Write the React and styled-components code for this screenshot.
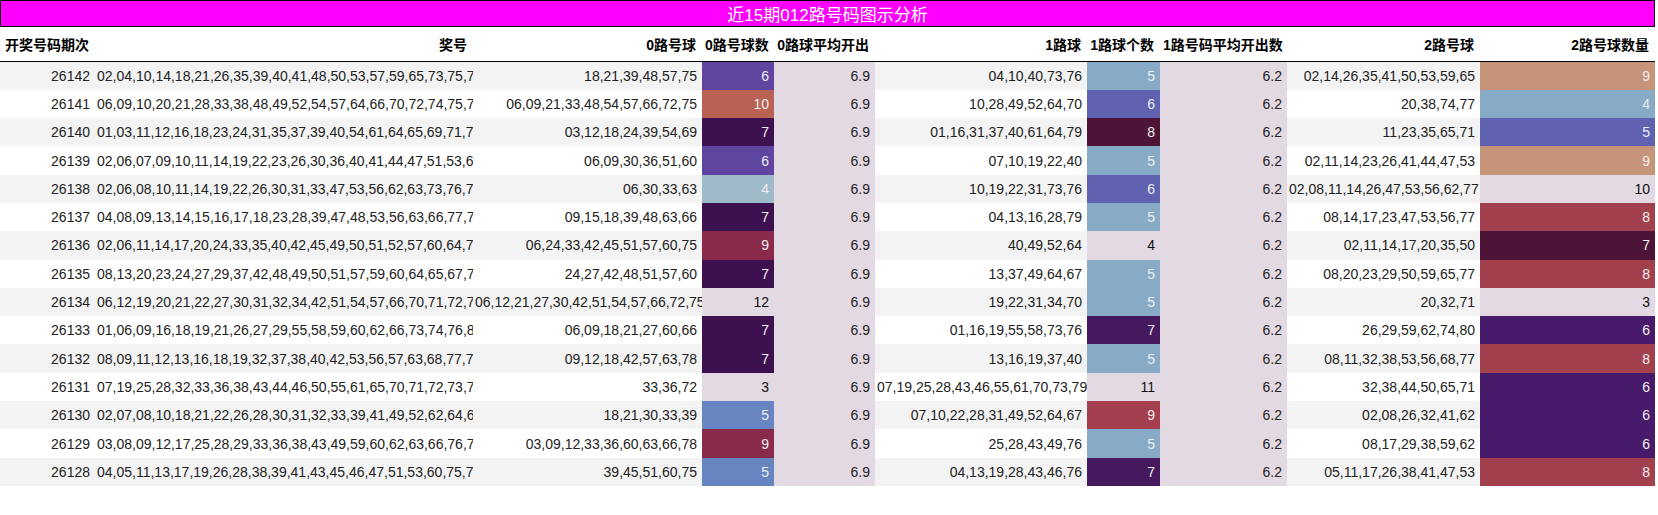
import styled, { createGlobalStyle } from "styled-components";

const GlobalStyle = createGlobalStyle`
  body {
    margin: 0;
    font-family: "Liberation Sans", "Noto Sans CJK SC", sans-serif;
    background: #fff;
  }
`;

const rows = [
  ["26142", "02,04,10,14,18,21,26,35,39,40,41,48,50,53,57,59,65,73,75,76", "18,21,39,48,57,75", 6, "04,10,40,73,76", 5, "02,14,26,35,41,50,53,59,65", 9],
  ["26141", "06,09,10,20,21,28,33,38,48,49,52,54,57,64,66,70,72,74,75,77", "06,09,21,33,48,54,57,66,72,75", 10, "10,28,49,52,64,70", 6, "20,38,74,77", 4],
  ["26140", "01,03,11,12,16,18,23,24,31,35,37,39,40,54,61,64,65,69,71,79", "03,12,18,24,39,54,69", 7, "01,16,31,37,40,61,64,79", 8, "11,23,35,65,71", 5],
  ["26139", "02,06,07,09,10,11,14,19,22,23,26,30,36,40,41,44,47,51,53,60", "06,09,30,36,51,60", 6, "07,10,19,22,40", 5, "02,11,14,23,26,41,44,47,53", 9],
  ["26138", "02,06,08,10,11,14,19,22,26,30,31,33,47,53,56,62,63,73,76,77", "06,30,33,63", 4, "10,19,22,31,73,76", 6, "02,08,11,14,26,47,53,56,62,77", 10],
  ["26137", "04,08,09,13,14,15,16,17,18,23,28,39,47,48,53,56,63,66,77,79", "09,15,18,39,48,63,66", 7, "04,13,16,28,79", 5, "08,14,17,23,47,53,56,77", 8],
  ["26136", "02,06,11,14,17,20,24,33,35,40,42,45,49,50,51,52,57,60,64,75", "06,24,33,42,45,51,57,60,75", 9, "40,49,52,64", 4, "02,11,14,17,20,35,50", 7],
  ["26135", "08,13,20,23,24,27,29,37,42,48,49,50,51,57,59,60,64,65,67,77", "24,27,42,48,51,57,60", 7, "13,37,49,64,67", 5, "08,20,23,29,50,59,65,77", 8],
  ["26134", "06,12,19,20,21,22,27,30,31,32,34,42,51,54,57,66,70,71,72,75", "06,12,21,27,30,42,51,54,57,66,72,75", 12, "19,22,31,34,70", 5, "20,32,71", 3],
  ["26133", "01,06,09,16,18,19,21,26,27,29,55,58,59,60,62,66,73,74,76,80", "06,09,18,21,27,60,66", 7, "01,16,19,55,58,73,76", 7, "26,29,59,62,74,80", 6],
  ["26132", "08,09,11,12,13,16,18,19,32,37,38,40,42,53,56,57,63,68,77,78", "09,12,18,42,57,63,78", 7, "13,16,19,37,40", 5, "08,11,32,38,53,56,68,77", 8],
  ["26131", "07,19,25,28,32,33,36,38,43,44,46,50,55,61,65,70,71,72,73,79", "33,36,72", 3, "07,19,25,28,43,46,55,61,70,73,79", 11, "32,38,44,50,65,71", 6],
  ["26130", "02,07,08,10,18,21,22,26,28,30,31,32,33,39,41,49,52,62,64,67", "18,21,30,33,39", 5, "07,10,22,28,31,49,52,64,67", 9, "02,08,26,32,41,62", 6],
  ["26129", "03,08,09,12,17,25,28,29,33,36,38,43,49,59,60,62,63,66,76,78", "03,09,12,33,36,60,63,66,78", 9, "25,28,43,49,76", 5, "08,17,29,38,59,62", 6],
  ["26128", "04,05,11,13,17,19,26,28,38,39,41,43,45,46,47,51,53,60,75,76", "39,45,51,60,75", 5, "04,13,19,28,43,46,76", 7, "05,11,17,26,38,41,47,53", 8],
];

const light = "#e2d9e2";
const palettes = [
  { 3: light, 4: "#9fbac9", 5: "#6785c0", 6: "#5f45a0", 7: "#3d1150", 9: "#8a2a4b", 10: "#b96253", 12: light },
  { 4: light, 5: "#87aac6", 6: "#5e62b1", 7: "#46195e", 8: "#4d1437", 9: "#a43f4f", 11: light },
  { 3: light, 4: "#87aac6", 5: "#5e62b1", 6: "#481a6b", 7: "#4d1437", 8: "#a3404e", 9: "#c69579", 10: light },
];

const Page = styled.div`
  width: 1655px;
`;

const Title = styled.div`
  height: 25px;
  background: #ff00ff;
  border: 1px solid #000;
  color: #fff;
  font-size: 17px;
  display: flex;
  align-items: center;
  justify-content: center;
`;

const Table = styled.table`
  border-collapse: collapse;
  table-layout: fixed;
  width: 1655px;
  font-size: 14px;
`;

const Head = styled.th`
  height: 34px;
  text-align: right;
  padding: 0 6px 0 3px;
  font-weight: bold;
  font-size: 14px;
  border-bottom: 1.5px solid #000;
  white-space: nowrap;
  color: #000;
`;

const Row = styled.tr`
  height: 28.3px;
  background: ${(p) => (p.$odd ? "#fff" : "#f3f3f3")};
`;

const Cell = styled.td`
  text-align: right;
  padding: 0 5px 0 2px;
  white-space: nowrap;
  overflow: hidden;
  color: #222;
  background: ${(p) => p.$bg || "transparent"};
`;

const Count = styled(Cell)`
  color: ${(p) => (p.$bg === light ? "#111" : "#eee")};
`;

const widths = [95, 378, 229, 72, 101, 212, 73, 127, 193, 175];
const heads = ["开奖号码期次", "奖号", "0路号球", "0路号球数", "0路球平均开出", "1路球", "1路球个数", "1路号码平均开出数", "2路号球", "2路号球数量"];

export default function App() {
  return (
    <Page>
      <GlobalStyle />
      <Title>近15期012路号码图示分析</Title>
      <Table>
        <colgroup>
          {widths.map((w, i) => (
            <col key={i} style={{ width: w }} />
          ))}
        </colgroup>
        <thead>
          <tr>
            {heads.map((h) => (
              <Head key={h}>{h}</Head>
            ))}
          </tr>
        </thead>
        <tbody>
          {rows.map((r, i) => (
            <Row key={r[0]} $odd={i % 2 === 1}>
              <Cell>{r[0]}</Cell>
              <Cell>{r[1]}</Cell>
              <Cell>{r[2]}</Cell>
              <Count $bg={palettes[0][r[3]]}>{r[3]}</Count>
              <Cell $bg={light}>6.9</Cell>
              <Cell>{r[4]}</Cell>
              <Count $bg={palettes[1][r[5]]}>{r[5]}</Count>
              <Cell $bg={light}>6.2</Cell>
              <Cell>{r[6]}</Cell>
              <Count $bg={palettes[2][r[7]]}>{r[7]}</Count>
            </Row>
          ))}
        </tbody>
      </Table>
    </Page>
  );
}
